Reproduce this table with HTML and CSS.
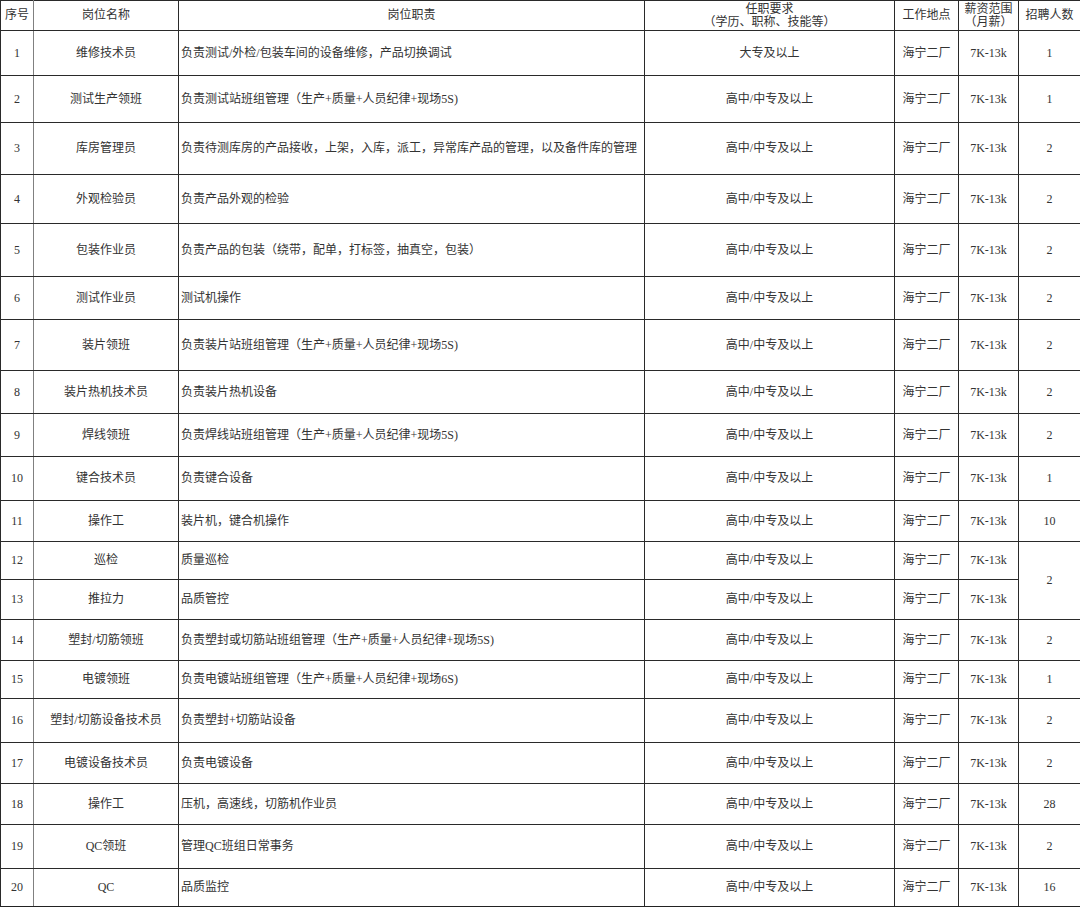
FILE: index.html
```html
<!DOCTYPE html>
<html lang="zh-CN">
<head>
<meta charset="utf-8">
<title>招聘岗位</title>
<link rel="stylesheet" href="styles.css">
</head>
<body>
<table class="grid">
  <colgroup>
    <col class="c-no"><col class="c-name"><col class="c-duty"><col class="c-req"><col class="c-loc"><col class="c-pay"><col class="c-num">
  </colgroup>
  <thead>
    <tr class="h30">
      <th class="no">序号</th>
      <th>岗位名称</th>
      <th>岗位职责</th>
      <th><span class="ln">任职要求</span><span class="ln">（学历、职称、技能等）</span></th>
      <th>工作地点</th>
      <th><span class="ln">薪资范围</span><span class="ln">（月薪）</span></th>
      <th>招聘人数</th>
    </tr>
  </thead>
  <tbody>
    <tr class="h45"><td class="no">1</td><td>维修技术员</td><td class="duty">负责测试/外检/包装车间的设备维修，产品切换调试</td><td>大专及以上</td><td>海宁二厂</td><td>7K-13k</td><td>1</td></tr>
    <tr class="h47"><td class="no">2</td><td>测试生产领班</td><td class="duty">负责测试站班组管理（生产+质量+人员纪律+现场5S)</td><td>高中/中专及以上</td><td>海宁二厂</td><td>7K-13k</td><td>1</td></tr>
    <tr class="h52"><td class="no">3</td><td>库房管理员</td><td class="duty">负责待测库房的产品接收，上架，入库，派工，异常库产品的管理，以及备件库的管理</td><td>高中/中专及以上</td><td>海宁二厂</td><td>7K-13k</td><td>2</td></tr>
    <tr class="h49"><td class="no">4</td><td>外观检验员</td><td class="duty">负责产品外观的检验</td><td>高中/中专及以上</td><td>海宁二厂</td><td>7K-13k</td><td>2</td></tr>
    <tr class="h53"><td class="no">5</td><td>包装作业员</td><td class="duty">负责产品的包装（绕带，配单，打标签，抽真空，包装）</td><td>高中/中专及以上</td><td>海宁二厂</td><td>7K-13k</td><td>2</td></tr>
    <tr class="h43"><td class="no">6</td><td>测试作业员</td><td class="duty">测试机操作</td><td>高中/中专及以上</td><td>海宁二厂</td><td>7K-13k</td><td>2</td></tr>
    <tr class="h51"><td class="no">7</td><td>装片领班</td><td class="duty">负责装片站班组管理（生产+质量+人员纪律+现场5S)</td><td>高中/中专及以上</td><td>海宁二厂</td><td>7K-13k</td><td>2</td></tr>
    <tr class="h43"><td class="no">8</td><td>装片热机技术员</td><td class="duty">负责装片热机设备</td><td>高中/中专及以上</td><td>海宁二厂</td><td>7K-13k</td><td>2</td></tr>
    <tr class="h43"><td class="no">9</td><td>焊线领班</td><td class="duty">负责焊线站班组管理（生产+质量+人员纪律+现场5S)</td><td>高中/中专及以上</td><td>海宁二厂</td><td>7K-13k</td><td>2</td></tr>
    <tr class="h44"><td class="no">10</td><td>键合技术员</td><td class="duty">负责键合设备</td><td>高中/中专及以上</td><td>海宁二厂</td><td>7K-13k</td><td>1</td></tr>
    <tr class="h41"><td class="no">11</td><td>操作工</td><td class="duty">装片机，键合机操作</td><td>高中/中专及以上</td><td>海宁二厂</td><td>7K-13k</td><td>10</td></tr>
    <tr class="h38"><td class="no">12</td><td>巡检</td><td class="duty">质量巡检</td><td>高中/中专及以上</td><td>海宁二厂</td><td>7K-13k</td><td rowspan="2">2</td></tr>
    <tr class="h40"><td class="no">13</td><td>推拉力</td><td class="duty">品质管控</td><td>高中/中专及以上</td><td>海宁二厂</td><td>7K-13k</td></tr>
    <tr class="h41"><td class="no">14</td><td>塑封/切筋领班</td><td class="duty">负责塑封或切筋站班组管理（生产+质量+人员纪律+现场5S)</td><td>高中/中专及以上</td><td>海宁二厂</td><td>7K-13k</td><td>2</td></tr>
    <tr class="h38"><td class="no">15</td><td>电镀领班</td><td class="duty">负责电镀站班组管理（生产+质量+人员纪律+现场6S)</td><td>高中/中专及以上</td><td>海宁二厂</td><td>7K-13k</td><td>1</td></tr>
    <tr class="h44"><td class="no">16</td><td>塑封/切筋设备技术员</td><td class="duty">负责塑封+切筋站设备</td><td>高中/中专及以上</td><td>海宁二厂</td><td>7K-13k</td><td>2</td></tr>
    <tr class="h41"><td class="no">17</td><td>电镀设备技术员</td><td class="duty">负责电镀设备</td><td>高中/中专及以上</td><td>海宁二厂</td><td>7K-13k</td><td>2</td></tr>
    <tr class="h41"><td class="no">18</td><td>操作工</td><td class="duty">压机，高速线，切筋机作业员</td><td>高中/中专及以上</td><td>海宁二厂</td><td>7K-13k</td><td>28</td></tr>
    <tr class="h44"><td class="no">19</td><td>QC领班</td><td class="duty">管理QC班组日常事务</td><td>高中/中专及以上</td><td>海宁二厂</td><td>7K-13k</td><td>2</td></tr>
    <tr class="h38 last"><td class="no">20</td><td>QC</td><td class="duty">品质监控</td><td>高中/中专及以上</td><td>海宁二厂</td><td>7K-13k</td><td>16</td></tr>
  </tbody>
</table>
</body>
</html>
```

FILE: styles.css
```css
html, body {
  margin: 0;
  padding: 0;
  background: #ffffff;
}

body {
  font-family: "Liberation Serif", "Noto Sans CJK SC", serif;
  font-size: 12px;
  color: #333333;
}

.grid {
  width: 1080px;
  table-layout: fixed;
  border-collapse: collapse;
  border: 1px solid #222222;
  border-bottom-width: 2px;
}

.c-no { width: 33px; }
.c-name { width: 145px; }
.c-duty { width: 466px; }
.c-req { width: 250px; }
.c-loc { width: 64px; }
.c-pay { width: 60px; }
.c-num { width: 62px; }

th, td {
  border: 1px solid #2a2a2a;
  padding: 0 1px;
  text-align: center;
  vertical-align: middle;
  font-weight: 400;
  line-height: 13px;
  white-space: nowrap;
  overflow: hidden;
}

td.no, th.no {
  border-right-color: #808080;
}

td.duty {
  text-align: left;
  padding-left: 2px;
}

.ln {
  display: block;
}

.h30 { height: 30px; }
.h38 { height: 38px; }
.h40 { height: 40px; }
.h41 { height: 41px; }
.h43 { height: 43px; }
.h44 { height: 44px; }
.h45 { height: 45px; }
.h47 { height: 47px; }
.h49 { height: 49px; }
.h51 { height: 51px; }
.h52 { height: 52px; }
.h53 { height: 53px; }
```
